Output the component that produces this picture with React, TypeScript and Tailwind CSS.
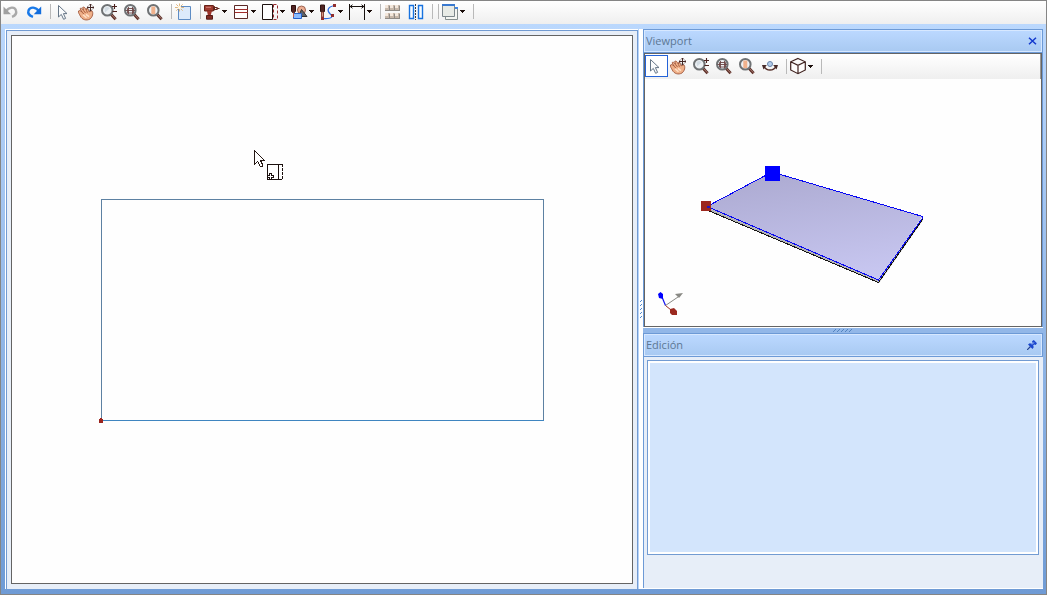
import type { ReactNode } from "react";

interface IconProps {
  children: ReactNode;
}

interface ToolButtonProps {
  label: string;
  active?: boolean;
  children: ReactNode;
}

interface PanelHeaderProps {
  title: string;
  children: ReactNode;
}

function Icon({ children }: IconProps) {
  return (
    <svg width="16" height="16" viewBox="0 0 16 16" fill="none" className="shrink-0 overflow-visible">
      {children}
    </svg>
  );
}

function ToolButton({ label, active, children }: ToolButtonProps) {
  return (
    <button
      type="button"
      aria-label={label}
      className={`flex h-[22px] w-[23px] shrink-0 items-center border pl-px ${
        active ? "border-[#2463d8] bg-white" : "border-transparent"
      }`}
    >
      {children}
    </button>
  );
}

function DropButton({ label, children }: ToolButtonProps) {
  return (
    <button
      type="button"
      aria-label={label}
      className="flex h-[22px] w-[29px] shrink-0 items-center gap-[2px] pl-px"
    >
      {children}
      <svg width="5" height="3" viewBox="0 0 5 3" shapeRendering="crispEdges">
        <path d="M0 0H5V1H4V2H3V3H2V2H1V1H0Z" fill="#1c0f0c" />
      </svg>
    </button>
  );
}

function Separator() {
  return <span className="mr-[2px] ml-[3px] h-[15px] w-px shrink-0 bg-[#b9b9b9]" />;
}

function PointerIcon() {
  return (
    <Icon>
      <path
        d="M3.5 1.5V13L6.3 10.4L8.6 15.3L10.6 14.4L8.4 9.6H12Z"
        fill="#fbfcfd"
        stroke="#667687"
        strokeWidth="1"
      />
    </Icon>
  );
}

function HandIcon() {
  return (
    <Icon>
      <path
        d="M0.5 7C1.5 6 2.8 7 4 8L2 4.8C3 3.4 4.3 4.6 5.5 6.3L4.7 3.4C6.3 2.4 7.3 4 8.3 6.2L8.7 4.3C10.4 4.4 10.2 6.4 11 7.8L14 6.8C15.6 9 14.6 13 12 15C8.5 17 4 15.8 2.3 12C1.6 10.3 0 8.8 0.5 7Z"
        fill="#efb089"
        stroke="#a0573b"
        strokeWidth="0.9"
      />
      <path d="M5.5 6.5L7.5 9M3.8 8L6 10.2M8.5 6.5L9.4 8.8" stroke="#a95c3b" />
      <path d="M5 10.7L8.5 13.7M8 10.3L11 12.7" stroke="#ffe1c8" strokeWidth="1.5" />
      <path
        d="M12.5 0V7M9 3.5H16M11.3 1.3L12.5 0L13.7 1.3M11.3 5.7L12.5 7L13.7 5.7M10.3 2.3L9 3.5L10.3 4.7M14.7 2.3L16 3.5L14.7 4.7"
        stroke="#452825"
        strokeWidth="1"
      />
    </Icon>
  );
}

function LensIcon({ children }: IconProps) {
  return (
    <Icon>
      <path d="M10 10.3L14.6 15.2" stroke="#5d3028" strokeWidth="2.9" />
      <path d="M10.6 10.7L14.5 14.8" stroke="#b0817a" strokeWidth="0.9" />
      <circle cx="6.3" cy="6.3" r="5.3" fill="#edf1f4" stroke="#6f7274" strokeWidth="2" />
      {children}
    </Icon>
  );
}

function NavigationTools({ pointerActive }: { pointerActive?: boolean }) {
  return (
    <>
      <ToolButton label="Seleccionar" active={pointerActive}>
        <PointerIcon />
      </ToolButton>
      <ToolButton label="Desplazar">
        <HandIcon />
      </ToolButton>
      <ToolButton label="Acercar o alejar">
        <LensIcon>
          <path d="M3.5 4Q6 2 8.8 4.3L4 8.5Z" fill="#d3dce3" />
          <path d="M13.5 0V5M11 2.5H16M11.5 7.5H16" stroke="#4b211e" strokeWidth="1.1" />
        </LensIcon>
      </ToolButton>
      <ToolButton label="Zoom ventana">
        <LensIcon>
          <path d="M3.5 4.5H9.5V9H3.5ZM1.5 6.5H11M4.5 3V10M8.5 3V10" stroke="#6d4545" strokeWidth="0.9" />
        </LensIcon>
      </ToolButton>
      <ToolButton label="Zoom extensión">
        <LensIcon>
          <path d="M4.3 2.5H8.3V10.1H4.3Z" fill="#f0b18c" />
        </LensIcon>
      </ToolButton>
    </>
  );
}

function MainToolbar() {
  return (
    <div className="h-[23px] shrink-0 overflow-hidden bg-linear-to-b from-white to-[#efefef]">
      <div className="flex h-[21px] items-center">
        <ToolButton label="Deshacer">
          <Icon>
            <path d="M3 7.5C6 2.5 12 2.5 13 6.5C13.7 9 12.5 11.5 9 12.8" stroke="#a9a9a9" strokeWidth="2.4" />
            <path d="M0.5 2.5V10.3H8Z" fill="#a0a0a0" />
          </Icon>
        </ToolButton>
        <ToolButton label="Rehacer">
          <Icon>
            <path d="M13 7.5C10 2.5 4 2.5 2.5 6.5C1.7 9 3 11.5 7 12.8" stroke="#1979e8" strokeWidth="2.4" />
            <path d="M15.2 2.5V10.3H7.7Z" fill="#126ddd" />
          </Icon>
        </ToolButton>
        <Separator />
        <NavigationTools />
        <Separator />
        <ToolButton label="Nuevo">
          <Icon>
            <path d="M2.5 2.5H14.5V15.5H2.5Z" fill="#dceafb" stroke="#5e8cc4" />
            <path d="M3.5 -0.5V7.5M-1 3.5H8M0.3 0.3L6.7 6.7M6.7 0.3L0.3 6.7" stroke="#dfb57f" />
            <circle cx="3.5" cy="3.5" r="1.7" fill="#fff9e5" />
          </Icon>
        </ToolButton>
        <Separator />
        <DropButton label="Taladro">
          <Icon>
            <path d="M0.5 1.5H9L10.5 2.5V6L9 7H0.5Z" fill="#a13b30" stroke="#672117" />
            <path d="M3 7H8L6.5 12H4Z" fill="#9d352b" />
            <path d="M2.5 11.5H8.5V15.2H2.5Z" fill="#812b23" stroke="#551b17" />
            <path d="M9.5 2V7M11 3.5H13V5.5H11M13 4.5H15.5" stroke="#652820" strokeWidth="1.2" />
            <path d="M2 3.3H7" stroke="#d1827a" />
          </Icon>
        </DropButton>
        <DropButton label="Canteado">
          <Icon>
            <path d="M1.5 1.5H14.5V14.5H1.5Z" fill="#fffdfd" stroke="#5b2927" />
            <path d="M1.5 5.5H14.5M1.5 8.5H14.5" stroke="#a22d2c" shapeRendering="crispEdges" />
          </Icon>
        </DropButton>
        <DropButton label="Placa">
          <Icon>
            <path d="M0.5 0.5H10.5V15.5H0.5Z" fill="#fff" stroke="#1e1311" />
            <path d="M11.5 0.5H15.5V15.5H11.5Z" stroke="#982e31" strokeDasharray="3 2" />
          </Icon>
        </DropButton>
        <DropButton label="Formas">
          <Icon>
            <circle cx="10.5" cy="6" r="4" fill="#ecac91" stroke="#9b6351" />
            <path d="M10.5 5.5L16 12.5H7.5Z" fill="#5f6268" stroke="#333" />
            <path d="M2.5 9.5H10.5V14.5H2.5Z" fill="#8cbcff" stroke="#2762c8" />
            <path d="M0.5 1.5H4.5V7L3.5 8.5H1.5L0.5 7Z" fill="#522525" stroke="#30100e" />
            <path d="M2.5 8.5V13" stroke="#bd5c4b" />
          </Icon>
        </DropButton>
        <DropButton label="Contornos">
          <Icon>
            <path d="M0.5 1H4.5V7.5H0.5Z" fill="#512423" stroke="#301413" />
            <path d="M1.5 8H3.5V13H1.5Z" fill="#d39a86" stroke="#8c4438" />
            <path d="M3 14.5C13 15 13 12.5 10.2 10C6.5 6.5 7.5 3 14.5 1.5" stroke="#2e6ee4" strokeWidth="1.2" />
            <path d="M1 13H4V16H1ZM13 0H16V3H13ZM11 10H14V13H11Z" fill="#902e2e" />
          </Icon>
        </DropButton>
        <DropButton label="Cotas">
          <Icon>
            <path d="M0.5 0V16M15.5 0V16" stroke="#17110e" />
            <path d="M1 2.5H15M3.5 0.7L1.2 2.5L3.5 4.3M12.5 0.7L14.8 2.5L12.5 4.3" stroke="#17110e" />
          </Icon>
        </DropButton>
        <Separator />
        <ToolButton label="Agrupar">
          <Icon>
            {[0, 5, 10].map((x) => (
              <g key={x}>
                <path
                  d={`M${x} 1H${x + 5}V7H${x}ZM${x} 9H${x + 5}V15H${x}Z`}
                  fill="#c7b8aa"
                />
                <path
                  d={`M${x} 1H${x + 3}V4H${x}ZM${x} 9H${x + 3}V12H${x}Z`}
                  fill="#f3e7dc"
                />
                <path d={`M${x + 4.5} 2V7M${x} 6.5H${x + 5}M${x + 4.5} 10V15M${x} 14.5H${x + 5}`} stroke="#8f8a85" />
              </g>
            ))}
          </Icon>
        </ToolButton>
        <ToolButton label="Simetría">
          <Icon>
            <path
              d="M1.5 1.5H5.5V14.5H1.5ZM10.5 1.5H14.5V14.5H10.5Z"
              fill="#f6fbff"
              stroke="#1772df"
              strokeWidth="1.4"
            />
            <path d="M7.5 0V16" stroke="#333b48" strokeDasharray="2 1" />
          </Icon>
        </ToolButton>
        <Separator />
        <Separator />
        <DropButton label="Ventanas">
          <Icon>
            <path d="M3.5 3.5H15.5V15.5H3.5Z" fill="#f5f6f2" stroke="#858e8d" />
            <path d="M3 3H16V5H3Z" fill="#4388e4" />
            <path d="M0.5 0.5H12.5V12.5H0.5Z" fill="#e8ebe6" stroke="#7d878b" />
            <path d="M0 0H13V2H0Z" fill="#3979d0" />
          </Icon>
        </DropButton>
        <Separator />
      </div>
    </div>
  );
}

function ViewportToolbar() {
  return (
    <div className="h-[25px] shrink-0 border-r border-[#999] bg-linear-to-b from-white to-[#efefef]">
      <div className="flex h-6 items-center">
        <NavigationTools pointerActive />
        <ToolButton label="Orbitar">
          <Icon>
            <path d="M2 8.5C4.5 13.2 11.5 13.2 14 8.5" stroke="#56302a" strokeWidth="1.5" />
            <path d="M0 7H4.8L1.5 11.5ZM16 7H11.2L14.5 11.5Z" fill="#482b28" />
            <circle cx="8" cy="6" r="2.5" fill="#b4cdea" stroke="#6683a9" />
          </Icon>
        </ToolButton>
        <Separator />
        <DropButton label="Vistas">
          <Icon>
            <path
              d="M8 0.5L15.3 3.8V12L8 15.7L0.7 12V3.8ZM0.7 3.8L8 7.3L15.3 3.8M8 7.3V15.7"
              fill="#fffdfc"
              stroke="#3e211e"
              strokeWidth="1.2"
            />
          </Icon>
        </DropButton>
        <Separator />
      </div>
    </div>
  );
}

function PanelHeader({ title, children }: PanelHeaderProps) {
  return (
    <header className="h-6 shrink-0 border border-[#6d9ad6]">
      <div className="flex h-full items-center justify-between border border-[#d7e8ff] bg-linear-to-b from-[#bbd8ff] to-[#a9caf2] px-px">
        <h2 className="font-['Open_Sans','Noto_Sans',sans-serif] text-[11px] leading-4 text-[#5c7794]">
          {title}
        </h2>
        {children}
      </div>
    </header>
  );
}

function DrawingArea() {
  return (
    <svg className="block h-full w-full" role="img" aria-label="Dibujo de la placa">
      <g shapeRendering="crispEdges">
        <path d="M89.5 384V163.5H531.5V384" fill="none" stroke="#5d81a2" />
        <path d="M89 384.5H532" stroke="#3f85c0" />
        <path d="M88 382H90V383H91V387H87V383H88Z" fill="#9b241e" />
      </g>
      {/* cursor with the pending board next to it */}
      <g shapeRendering="crispEdges">
        <path
          d="M242.5 114.5V128.5L245.5 125.5L248.5 130.5H250.5V128.5L248.5 124.5H252.5Z"
          fill="#fff"
          stroke="#251713"
        />
        <path d="M255.5 128.5H266.5V143.5H255.5Z" fill="#fff" stroke="#1b100e" />
        <path d="M267 128.5H271M267 143.5H271M270.5 128V144" fill="none" stroke="#1b100e" strokeDasharray="3 1" />
        <path
          d="M257.5 137.5H259.5V139.5H261.5V141.5H259.5V143.5H257.5V141.5H255.5V139.5H257.5Z"
          fill="#fff"
          stroke="#1b100e"
        />
      </g>
    </svg>
  );
}

function BoardPreview() {
  return (
    <svg className="block h-full w-full" role="img" aria-label="Vista 3D de la placa">
      <defs>
        <linearGradient id="board" x1="0.35" y1="0" x2="0.65" y2="1">
          <stop offset="0" stopColor="#adabd2" />
          <stop offset="1" stopColor="#c8c7f1" />
        </linearGradient>
      </defs>
      <path d="M62 128L234 201L278 138V141L234 204L62 131Z" fill="#b2b4b7" />
      <path d="M127 93L277.5 137.5L233.5 201.5L62 128Z" fill="url(#board)" />
      <g shapeRendering="crispEdges" fill="none">
        <path d="M62 131L233.5 203.5L277.5 140.5" stroke="#161412" />
        <path d="M127 93L277.5 137.5V139L233.5 201L62 127.5Z" stroke="#0707f4" />
        <path d="M56 122H66V132H56Z" fill="#9c261d" />
        <path d="M62 127H65V129H62Z" fill="#2215bd" />
        <path d="M120 87H135V102H120Z" fill="#0000ff" />
      </g>
      {/* axes */}
      <path d="M20.5 226.5L17 218" stroke="#1212ee" strokeWidth="1.2" />
      <path d="M13 215L15.5 213L18 215V220L14 219Z" fill="#0000ff" />
      <path d="M20.5 226.5L33 218" stroke="#898984" />
      <path d="M30 215L38 214L34 219Z" fill="#898984" />
      <path d="M20.5 226.5L26 231" stroke="#9b291f" />
      <path d="M25 230L29 229L32 232V236H27L25 234Z" fill="#9b291f" />
    </svg>
  );
}

export default function App() {
  return (
    <div className="flex h-screen flex-col border border-[#858585]">
      <MainToolbar />
      <div className="flex min-h-0 flex-1 bg-linear-to-b from-[#bbd8fd] to-[#6f9bd5] pt-[5px] pr-[3px] pb-[5px] pl-1">
        <main className="min-w-0 flex-1 border-t border-l border-white">
          <div className="h-full border-x border-t border-[#729bd2] bg-[#e7eef8] px-1 pt-1 pb-[5px]">
            <div className="h-full border border-[#646464] bg-[#fefefe]">
              <DrawingArea />
            </div>
          </div>
        </main>
        <div className="flex w-[5px] shrink-0 flex-col items-end border-l border-[#b7d4fa] bg-white pt-[271px]">
          <svg width="4" height="20" viewBox="0 0 4 20" shapeRendering="crispEdges">
            {[0, 4, 8, 12, 16].map((y) => (
              <path key={y} d={`M1 ${y + 1}H2V${y}H3V${y + 1}H2V${y + 2}H1Z`} fill="#5289cc" />
            ))}
          </svg>
        </div>
        <aside className="flex w-[400px] shrink-0 flex-col">
          <section aria-label="Viewport">
            <PanelHeader title="Viewport">
              <button type="button" aria-label="Cerrar" className="flex size-4 items-center justify-center">
                <svg width="9" height="8" viewBox="0 0 9 8">
                  <path d="M1 0.8L8 7.2M8 0.8L1 7.2" stroke="#1238cd" strokeWidth="1.5" />
                </svg>
              </button>
            </PanelHeader>
            <div className="border-x border-[#6d9ad6]">
              <div className="flex h-[274px] flex-col border border-[#646464] bg-[#fefefe]">
                <ViewportToolbar />
                <div className="min-h-0 flex-1">
                  <BoardPreview />
                </div>
              </div>
            </div>
          </section>
          <div className="flex h-[6px] shrink-0 items-center justify-center border-t border-white bg-[#92b7e8]">
            <svg width="20" height="4" viewBox="0 0 20 4" shapeRendering="crispEdges">
              {[0, 4, 8, 12, 16].map((x) => (
                <path
                  key={x}
                  d={`M${x + 2} 0H${x + 3}V1H${x + 2}ZM${x + 1} 1H${x + 2}V2H${x + 1}ZM${x} 2H${x + 1}V3H${x}Z`}
                  fill="#5384bf"
                />
              ))}
            </svg>
          </div>
          <section aria-label="Edición" className="flex min-h-0 flex-1 flex-col border-b border-white bg-[#e7eef8]">
            <PanelHeader title="Edición">
              <button type="button" aria-label="Fijar panel" className="flex size-4 items-center justify-center">
                <svg width="10" height="10" viewBox="0 0 10 10">
                  <path d="M0 10L3.5 6.5" stroke="#24418e" strokeWidth="1.2" />
                  <path
                    d="M1 4.5L2.7 3.3L4.8 3.8L5.6 2.8L5 1.3L6.8 0L10 3.2L8.7 5L7.2 4.4L6.2 5.2L6.7 7.3L5.5 9Z"
                    fill="#1b47ce"
                  />
                  <path d="M6.8 2.5L5 4.5" stroke="#adc9fa" fill="none" />
                </svg>
              </button>
            </PanelHeader>
            <div className="flex flex-1 flex-col border-l border-[#6d9ad6] pt-[3px] pr-1 pb-[33px] pl-[3px]">
              <div className="flex flex-1 border border-[#729bd2] bg-white p-[2px]">
                <div className="flex-1 bg-[#d3e5fc]" />
              </div>
            </div>
          </section>
        </aside>
      </div>
    </div>
  );
}
